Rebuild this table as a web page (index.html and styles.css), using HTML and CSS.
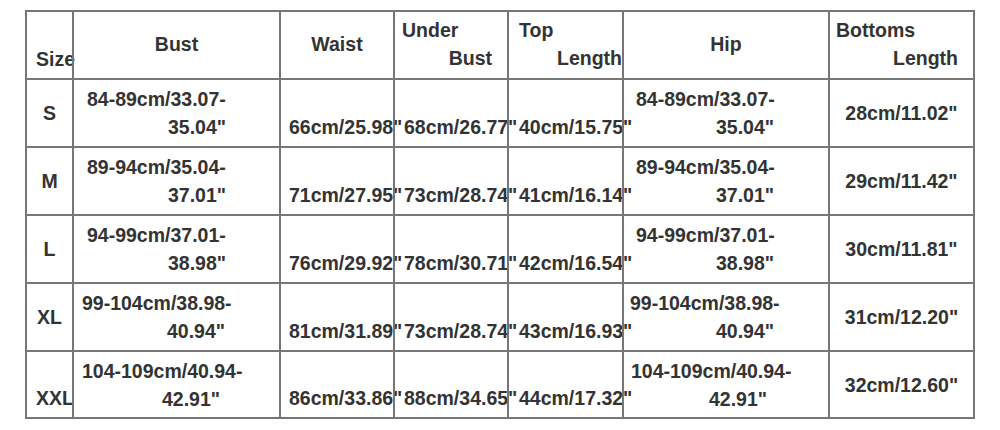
FILE: index.html
```html
<!DOCTYPE html>
<html lang="en">
<head>
<meta charset="utf-8">
<title>Size Chart</title>
<link rel="stylesheet" href="styles.css">
</head>
<body>
<div class="chart" role="table" aria-label="Size chart">
  <div class="cell size low" role="columnheader"><span class="line">Size</span></div>
  <div class="cell mid head" role="columnheader"><span class="line">Bust</span></div>
  <div class="cell mid head" role="columnheader"><span class="line">Waist</span></div>
  <div class="cell head head-under" role="columnheader"><span class="line first">Under</span><span class="line second">Bust</span></div>
  <div class="cell head head-top" role="columnheader"><span class="line first">Top</span><span class="line second">Length</span></div>
  <div class="cell mid head" role="columnheader"><span class="line">Hip</span></div>
  <div class="cell head head-bottoms" role="columnheader"><span class="line first">Bottoms</span><span class="line second">Length</span></div>

  <div class="cell size mid"><span class="line">S</span></div>
  <div class="cell bust"><span class="line first">84-89cm/33.07-</span><span class="line second">35.04"</span></div>
  <div class="cell val waist"><span class="line">66cm/25.98"</span></div>
  <div class="cell val under"><span class="line">68cm/26.77"</span></div>
  <div class="cell val top"><span class="line">40cm/15.75"</span></div>
  <div class="cell hip"><span class="line first">84-89cm/33.07-</span><span class="line second">35.04"</span></div>
  <div class="cell mid"><span class="line">28cm/11.02"</span></div>

  <div class="cell size mid"><span class="line">M</span></div>
  <div class="cell bust"><span class="line first">89-94cm/35.04-</span><span class="line second">37.01"</span></div>
  <div class="cell val waist"><span class="line">71cm/27.95"</span></div>
  <div class="cell val under"><span class="line">73cm/28.74"</span></div>
  <div class="cell val top"><span class="line">41cm/16.14"</span></div>
  <div class="cell hip"><span class="line first">89-94cm/35.04-</span><span class="line second">37.01"</span></div>
  <div class="cell mid"><span class="line">29cm/11.42"</span></div>

  <div class="cell size mid"><span class="line">L</span></div>
  <div class="cell bust"><span class="line first">94-99cm/37.01-</span><span class="line second">38.98"</span></div>
  <div class="cell val waist"><span class="line">76cm/29.92"</span></div>
  <div class="cell val under"><span class="line">78cm/30.71"</span></div>
  <div class="cell val top"><span class="line">42cm/16.54"</span></div>
  <div class="cell hip"><span class="line first">94-99cm/37.01-</span><span class="line second">38.98"</span></div>
  <div class="cell mid"><span class="line">30cm/11.81"</span></div>

  <div class="cell size mid"><span class="line">XL</span></div>
  <div class="cell bust wide"><span class="line first">99-104cm/38.98-</span><span class="line second">40.94"</span></div>
  <div class="cell val waist"><span class="line">81cm/31.89"</span></div>
  <div class="cell val under"><span class="line">73cm/28.74"</span></div>
  <div class="cell val top"><span class="line">43cm/16.93"</span></div>
  <div class="cell hip wide"><span class="line first">99-104cm/38.98-</span><span class="line second">40.94"</span></div>
  <div class="cell mid"><span class="line">31cm/12.20"</span></div>

  <div class="cell size low"><span class="line">XXL</span></div>
  <div class="cell bust widest"><span class="line first">104-109cm/40.94-</span><span class="line second">42.91"</span></div>
  <div class="cell val waist"><span class="line">86cm/33.86"</span></div>
  <div class="cell val under"><span class="line">88cm/34.65"</span></div>
  <div class="cell val top"><span class="line">44cm/17.32"</span></div>
  <div class="cell hip widest"><span class="line first">104-109cm/40.94-</span><span class="line second">42.91"</span></div>
  <div class="cell mid"><span class="line">32cm/12.60"</span></div>
</div>
</body>
</html>
```
FILE: styles.css
```css
html, body {
  margin: 0;
  padding: 0;
  background: #ffffff;
}

body {
  font: bold 19.5px/28px "Liberation Sans", Arial, sans-serif;
  color: #333333;
}

.chart {
  display: grid;
  grid-template-columns: 47px 207px 114px 114px 115px 206px 145px;
  grid-template-rows: 68px 68px 68px 68px 68px 67px;
  width: max-content;
  margin: 10px 0 0 25px;
  border-right: 2px solid #767676;
  border-bottom: 2px solid #767676;
}

.cell {
  box-sizing: border-box;
  min-width: 0;
  display: flex;
  flex-direction: column;
  justify-content: center;
  border-left: 2px solid #767676;
  border-top: 2px solid #767676;
}

.line {
  display: block;
  white-space: nowrap;
}

.mid {
  text-align: center;
}

.low {
  justify-content: flex-end;
  padding-bottom: 5px;
}

.head {
  padding-bottom: 3px;
}

.size {
  padding-left: 9px;
  padding-right: 9px;
  text-align: center;
}

/* two-line headers */
.head-under .first { padding-left: 7px; }
.head-under .second { text-align: right; padding-right: 15px; }
.head-top .first { padding-left: 10px; }
.head-top .second { text-align: right; padding-right: 0; }
.head-bottoms .first { padding-left: 6px; }
.head-bottoms .second { text-align: right; padding-right: 15px; }

/* two-line ranges */
.bust .second,
.hip .second {
  text-align: right;
}
.bust .first { padding-left: 13px; }
.bust .second { padding-right: 53px; }
.bust.wide .first { padding-left: 8px; }
.bust.wide .second { padding-right: 54px; }
.bust.widest .first { padding-left: 8px; }
.bust.widest .second { padding-right: 59px; }

.hip .first { padding-left: 12px; }
.hip .second { padding-right: 54px; }
.hip.wide .first { padding-left: 6px; }
.hip.wide .second { padding-right: 54px; }
.hip.widest .first { padding-left: 7px; }
.hip.widest .second { padding-right: 61px; }

/* single values sitting on the lower line */
.val {
  justify-content: flex-end;
  padding-bottom: 5px;
}
.waist { padding-left: 8px; }
.under { padding-left: 9px; }
.top { padding-left: 10px; }
```
